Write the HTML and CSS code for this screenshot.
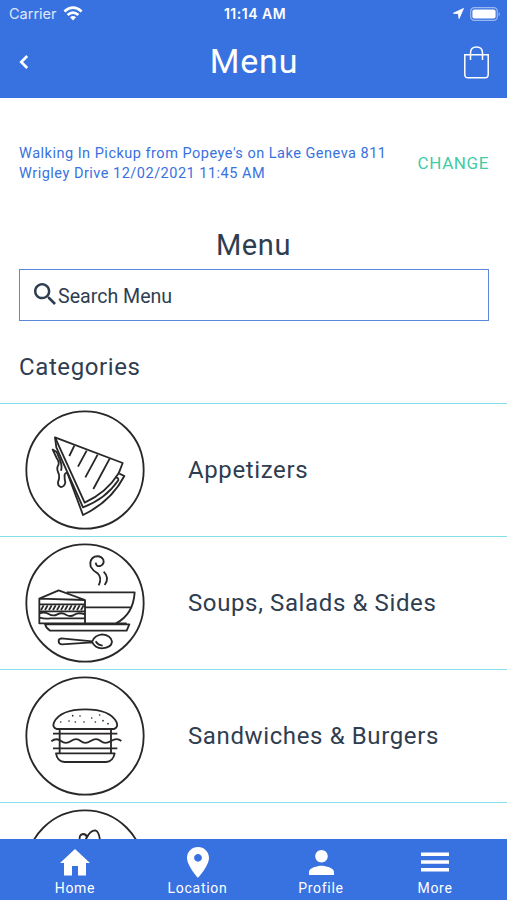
FILE: index.html
```html
<!DOCTYPE html>
<html lang="en">

<head>
    <meta charset="utf-8">
    <title>Menu</title>
    <link rel="stylesheet" href="styles.css">
</head>

<body>
    <header>
        <div class="status">
            <div class="carrier">
                <span>Carrier</span>
                <svg width="20" height="15" viewBox="0 0 20 15" fill="none" stroke="#fff" stroke-width="2.7">
                    <path d="M1.4 5.4Q10 -2 18.6 5.4" />
                    <path d="M4.6 9Q10 4.4 15.4 9" />
                    <path d="M7 11.3Q10 8.8 13 11.3L10 14.5Z" fill="#fff" stroke="none" />
                </svg>
            </div>
            <b>11:14 AM</b>
            <div class="power">
                <svg width="11" height="11" viewBox="0 0 12 12" fill="#fff" stroke="#fff" stroke-linejoin="round">
                    <path d="M11.4 .6L.5 5.7L5.9 6.1L6.6 11.5Z" />
                </svg>
                <svg width="31" height="14" viewBox="0 0 31 14">
                    <rect x=".7" y=".7" width="26.6" height="12.6" rx="3.6" fill="none" stroke="#9bb8f0" stroke-width="1.2" />
                    <rect x="2.4" y="2.4" width="23.2" height="9.2" rx="2" fill="#fff" />
                    <path d="M28.7 4.7Q31 7 28.7 9.3Z" fill="#9bb8f0" />
                </svg>
            </div>
        </div>
        <div class="title">
            <svg width="10" height="14" viewBox="0 0 10 14" fill="none" stroke="#fff" stroke-width="2.6">
                <path d="M8.2 1L2.2 7L8.2 13" />
            </svg>
            <h1>Menu</h1>
            <svg width="25" height="33" viewBox="0 0 25 33" fill="none" stroke="#fff" stroke-width="1.5">
                <path d="M.8 8.8H24.2V28.5Q24.2 31.8 20.9 31.8H4.1Q.8 31.8 .8 28.5Z" />
                <path d="M6.5 14V7Q6.5 1 12.5 1T18.5 7V14" />
            </svg>
        </div>
    </header>
    <main>
        <div class="pickup">
            <p>Walking In Pickup from Popeye's on Lake Geneva 811 Wrigley Drive 12/02/2021 11:45 AM</p>
            <a>CHANGE</a>
        </div>
        <h2>Menu</h2>
        <div class="search">
            <svg width="22" height="22" viewBox="3 3 17.5 17.5" fill="#2f3d50">
                <path d="M15.5 14h-.79l-.28-.27C15.41 12.59 16 11.11 16 9.5 16 5.91 13.09 3 9.5 3S3 5.91 3 9.5 5.91 16 9.5 16c1.61 0 3.09-.59 4.23-1.57l.27.28v.79l5 4.99L20.49 19l-4.99-5zm-6 0C7.01 14 5 11.99 5 9.5S7.01 5 9.5 5 14 7.01 14 9.5 11.99 14 9.5 14z" />
            </svg>
            <span>Search Menu</span>
        </div>
        <h3>Categories</h3>
        <ul>
            <li>
                <svg class="picture" viewBox="45 30 360 360">
                    <circle cx="225" cy="210" r="176" />
                    <path d="M135 112L338 189L326 220Q290 278 224 308Z" />
                    <path d="M193 137L178 168M230 152L204 200M263 164L226 232M299 176L250 267" />
                    <path d="M135 112L139 142L219 322Q286 298 325 241Q326 232 317 233" />
                    <path d="M328 221L343 228Q303 305 219 345L174 224Q169 213 164 224Q163 236 166 247Q163 261 152 261Q143 258 144 246Q151 229 144 216Q139 204 145 195Q149 187 140 174L128 149L140 156L151 182Q157 199 153 212" />
                </svg>
                <span>Appetizers</span>
            </li>
            <li>
                <svg class="picture" viewBox="45 24 360 360">
                    <circle cx="225" cy="204" r="176" />
                    <path d="M88 191L146 166L225 195V265H88ZM88 191L225 195" />
                    <path d="M88 208H225M88 229H225M88 248Q106 252 121 250H225" />
                    <path d="M88 235Q103 229 116 237T142 238T168 239T193 239T225 238" />
                    <path d="M93 225L101 211M105 225L113 211M117 225L125 211M129 225L137 211M141 225L149 211M153 225L161 211M165 225L173 211M177 225L185 211M189 225L197 211M201 225L209 211M213 225L221 211" />
                    <path d="M170 172H374Q370 238 318 265M225 217H364" />
                    <path d="M105 268H358L350 287H120Q109 281 105 268ZM225 265H350" />
                    <path d="M247 319L154 310Q145 311 146 320Q147 328 156 328L247 322Q255 339 276 340Q305 338 306 320Q303 300 276 298Q253 301 247 319ZM257 319Q264 331 278 332" />
                    <path d="M257 83Q259 96 271 93Q284 87 280 74Q272 60 254 65Q237 73 242 95Q249 108 263 115Q277 128 266 151M281 110Q300 129 284 150" />
                </svg>
                <span>Soups, Salads &amp; Sides</span>
            </li>
            <li>
                <svg class="picture" viewBox="45 25 360 360">
                    <circle cx="225" cy="205" r="176" />
                    <path d="M140 184Q126 180 132 164Q151 125 226 125Q301 125 320 164Q325 180 312 184Z" />
                    <path d="M149 184V257M303 184V257M129 198H322M129 242H322" />
                    <path d="M124 221Q139 209 153 220T183 220T212 220T242 220T272 220T303 220T334 220" />
                    <path d="M138 257H314Q309 282 288 283H164Q142 282 138 257Z" />
                    <path class="seeds" d="M152 163h.1M177 160h.1M188 144h.1M196 163h.1M210 145h.1M222 163h.1M245 151h.1M256 163h.1M269 142h.1M279 159h.1M294 168h.1" />
                </svg>
                <span>Sandwiches &amp; Burgers</span>
            </li>
            <li>
                <svg class="picture" viewBox="45 426 360 360">
                    <circle cx="225" cy="606" r="176" />
                    <path d="M209 520Q207 502 219 501Q229 501 231 511Q240 491 256 490Q267 493 270 520M231 511L227 517" />
                </svg>
            </li>
        </ul>
    </main>
    <nav>
        <a>
            <svg width="30" height="27" viewBox="0 0 30 27" fill="#fff">
                <path d="M15 0L30 14H26V26.5H18V17H12V26.5H4V14H0Z" />
            </svg>
            <span>Home</span>
        </a>
        <a>
            <svg width="22" height="31" viewBox="5 2 14 20" preserveAspectRatio="none" fill="#fff">
                <path d="M12 2C8.13 2 5 5.13 5 9c0 5.25 7 13 7 13s7-7.75 7-13c0-3.87-3.13-7-7-7zm0 9.5c-1.38 0-2.5-1.12-2.5-2.5s1.12-2.5 2.5-2.5 2.5 1.12 2.5 2.5-1.12 2.5-2.5 2.5z" />
            </svg>
            <span>Location</span>
        </a>
        <a>
            <svg width="25" height="25" viewBox="4 4 16 16" fill="#fff">
                <path d="M12 12c2.21 0 4-1.79 4-4s-1.79-4-4-4-4 1.79-4 4 1.79 4 4 4zm0 2c-2.67 0-8 1.34-8 4v2h16v-2c0-2.66-5.33-4-8-4z" />
            </svg>
            <span>Profile</span>
        </a>
        <a>
            <svg width="28" height="20" viewBox="0 0 28 20" fill="#fff">
                <path d="M0 .5H28V4H0ZM0 8.2H28V11.7H0ZM0 16H28V19.5H0Z" />
            </svg>
            <span>More</span>
        </a>
    </nav>
</body>

</html>
```
FILE: styles.css
```css
body {
    margin: 0;
    height: 900px;
    display: flex;
    flex-direction: column;
    overflow: hidden;
    background: #fff;
    color: #2f3d50;
    font-family: Roboto, sans-serif;
}

h1, h2, h3, p, ul {
    margin: 0;
    padding: 0;
    font-weight: normal;
}

svg {
    flex-shrink: 0;
    display: block;
}

header {
    height: 98px;
    flex-shrink: 0;
    background: #3871e0;
    color: #fff;
}

.status {
    height: 27px;
    padding: 0 6px 0 9px;
    display: grid;
    grid-template-columns: 1fr auto 1fr;
    align-items: center;
    font: 14.5px Inter, sans-serif;
}

.status b {
    font-size: 14px;
    font-weight: 600;
    letter-spacing: .5px;
}

.carrier, .power {
    display: flex;
    align-items: center;
    gap: 6px;
}

.carrier {
    color: #dfe8fb;
}

.power {
    justify-content: flex-end;
}

.title {
    height: 70px;
    padding: 0 18px 0 19px;
    display: grid;
    grid-template-columns: 1fr auto 1fr;
    align-items: center;
}

.title svg:last-child {
    justify-self: end;
}

h1 {
    margin-bottom: 2px;
    font-size: 34px;
    line-height: 40px;
    letter-spacing: .8px;
}

main {
    flex: 1;
    min-height: 0;
    overflow: hidden;
}

.pickup {
    padding: 46px 18px 0 19px;
    display: flex;
    justify-content: space-between;
    align-items: center;
}

.pickup p {
    width: 375px;
    color: #3871e0;
    font-size: 14.5px;
    line-height: 20px;
    letter-spacing: .5px;
}

.pickup a {
    margin-bottom: 3px;
    color: #42cba6;
    font-size: 17px;
    letter-spacing: .6px;
}

h2 {
    margin-top: 43px;
    font-size: 29px;
    line-height: 36px;
    letter-spacing: .6px;
    text-align: center;
}

.search {
    height: 50px;
    margin: 6px 18px 0 19px;
    padding-left: 14px;
    border: 1px solid #5b87d8;
    display: flex;
    align-items: center;
    gap: 2px;
    font-size: 19.6px;
}

.search svg {
    margin-bottom: 3px;
}

.search span {
    padding-top: 2px;
}

h3 {
    margin: 30px 19px 20px;
    font-size: 24px;
    line-height: 32px;
    letter-spacing: .6px;
}

ul {
    list-style: none;
}

li {
    height: 132px;
    padding-left: 25px;
    border-top: 1px solid #83dfec;
    display: flex;
    align-items: center;
    gap: 43px;
    font-size: 24px;
    letter-spacing: .62px;
}

.picture {
    width: 120px;
    height: 120px;
    fill: none;
    stroke: #292727;
    stroke-width: 5.5;
    stroke-linejoin: round;
}

.picture .seeds {
    stroke-width: 5;
    stroke-linecap: round;
}

nav {
    height: 61px;
    flex-shrink: 0;
    padding: 0 17px;
    display: grid;
    grid-template-columns: 116px 129px 118px 1fr;
    background: #3871e0;
    color: #fff;
    font-size: 14px;
    letter-spacing: .7px;
}

nav a {
    display: grid;
    grid-template-rows: 40px 17px;
    justify-items: center;
    align-items: center;
}

nav svg {
    margin-top: 6px;
}
```
